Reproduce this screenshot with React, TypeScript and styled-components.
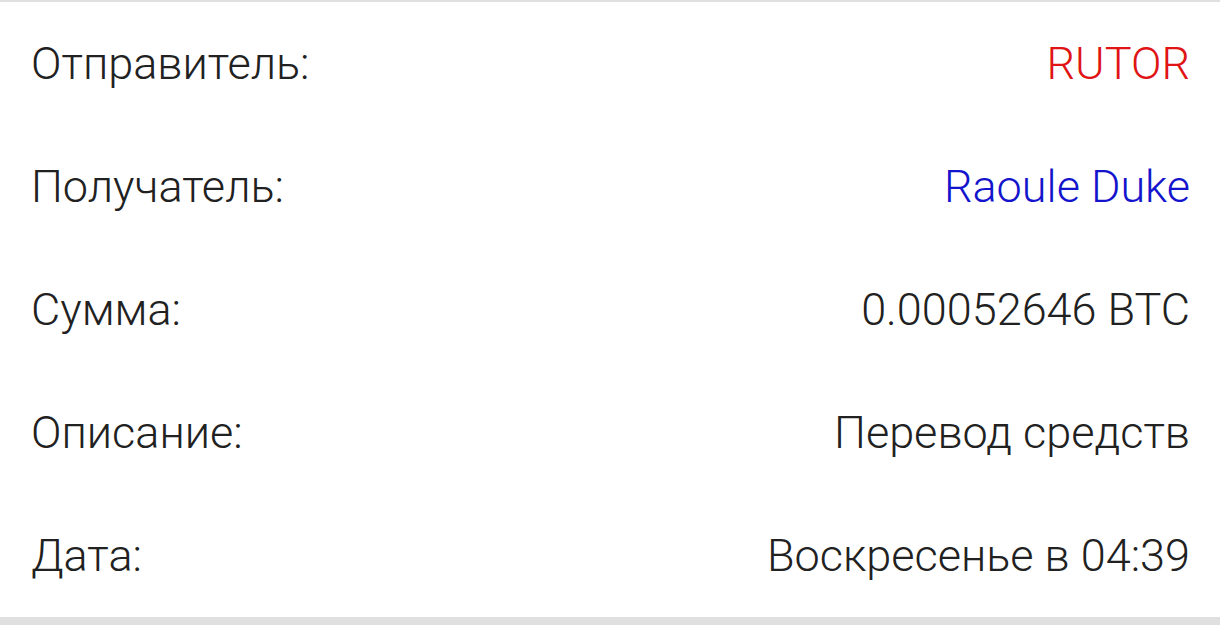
import React from "react";
import styled, { createGlobalStyle } from "styled-components";

const Global = createGlobalStyle`
  html, body { margin: 0; padding: 0; background: #ffffff; }
  body { font-family: Roboto, "Noto Sans", sans-serif; }
`;

const Card = styled.div`
  width: 1220px;
  height: 625px;
  box-sizing: border-box;
  border-top: 2px solid #e0e0e0;
  border-bottom: 8px solid #e0e0e0;
  background: #ffffff;
  display: flex;
  flex-direction: column;
`;

const Row = styled.div`
  height: 123px;
  display: flex;
  align-items: center;
  justify-content: space-between;
  padding: 0 30px 0 31px;
  font-size: 45px;
  font-weight: 300;
  color: #212121;
`;

const Label = styled.span`
  white-space: nowrap;
`;

const Value = styled.span<{ $tone?: "red" | "blue" }>`
  white-space: nowrap;
  color: ${(p) => (p.$tone === "red" ? "#e01414" : p.$tone === "blue" ? "#1414cc" : "#212121")};
`;

const rows: { label: string; value: string; tone?: "red" | "blue" }[] = [
  { label: "Отправитель:", value: "RUTOR", tone: "red" },
  { label: "Получатель:", value: "Raoule Duke", tone: "blue" },
  { label: "Сумма:", value: "0.00052646 BTC" },
  { label: "Описание:", value: "Перевод средств" },
  { label: "Дата:", value: "Воскресенье в 04:39" },
];

export default function App() {
  return (
    <>
      <Global />
      <Card>
        {rows.map((r) => (
          <Row key={r.label}>
            <Label>{r.label}</Label>
            <Value $tone={r.tone}>{r.value}</Value>
          </Row>
        ))}
      </Card>
    </>
  );
}
